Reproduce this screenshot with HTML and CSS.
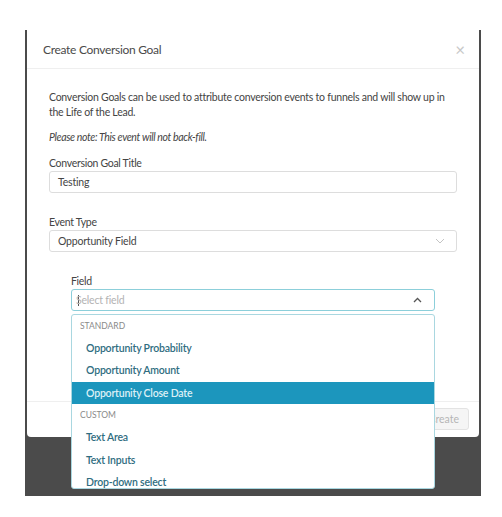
FILE: index.html
```html
<!DOCTYPE html>
<html lang="en">
<head>
    <meta charset="UTF-8">
    <meta name="viewport" content="width=device-width, initial-scale=1.0">
    <title>Create Conversion Goal</title>
    <link rel="stylesheet" href="styles.css">
</head>
<body>
    <div class="overlay">
        <div class="modal">
            <div class="modal-header">
                <h2>Create Conversion Goal</h2>
                <span class="close">&times;</span>
            </div>
            <div class="modal-body">
                <p class="intro">Conversion Goals can be used to attribute conversion events to funnels and will show up in the Life of the Lead.</p>
                <p class="note">Please note: This event will not back-fill.</p>

                <div class="form-group">
                    <label>Conversion Goal Title</label>
                    <div class="input">Testing</div>
                </div>

                <div class="form-group">
                    <label>Event Type</label>
                    <div class="input select">
                        <span>Opportunity Field</span>
                        <svg class="chevron" width="10" height="6" viewBox="0 0 10 6"><path d="M1 1l4 4 4-4" fill="none" stroke="#c4c4c4" stroke-width="1"/></svg>
                    </div>
                </div>

                <div class="form-group sub-field">
                    <label>Field</label>
                    <div class="input select focused">
                        <span class="placeholder"><i class="caret"></i>Select field</span>
                        <svg class="chevron" width="9" height="6" viewBox="0 0 9 6"><path d="M1 5l3.5-3.5L8 5" fill="none" stroke="#555" stroke-width="1.3"/></svg>
                    </div>
                    <div class="dropdown">
                        <div class="group-title">Standard</div>
                        <div class="option">Opportunity Probability</div>
                        <div class="option">Opportunity Amount</div>
                        <div class="option active">Opportunity Close Date</div>
                        <div class="group-title">Custom</div>
                        <div class="option">Text Area</div>
                        <div class="option">Text Inputs</div>
                        <div class="option">Drop-down select</div>
                    </div>
                </div>
            </div>
            <div class="modal-footer">
                <button type="button">Create</button>
            </div>
        </div>
    </div>
</body>
</html>
```

FILE: styles.css
```css
body {
    font-family: 'Lato', 'Liberation Sans', sans-serif;
    margin: 0;
    padding: 0;
    background-color: #ffffff;
    color: #444444;
}
.overlay {
    margin: 30px 0 0 25px;
    width: 456px;
    height: 466px;
    padding: 0 2px;
    box-sizing: border-box;
    background-color: #4b4b4b;
}
.modal {
    background-color: #ffffff;
    height: 407px;
    border-radius: 0 0 4px 4px;
    display: flex;
    flex-direction: column;
}
.modal-header {
    height: 38px;
    display: flex;
    align-items: center;
    justify-content: space-between;
    padding: 0 14px 0 16px;
    border-bottom: 1px solid #efefef;
}
.modal-header h2 {
    margin: 0;
    font-size: 12px;
    letter-spacing: -0.3px;
    font-weight: normal;
    color: #4a4a4a;
}
.close {
    font-size: 17px;
    color: #c8c8c8;
    line-height: 1;
}
.modal-body {
    flex: 1;
    padding: 21px 22px 0 22px;
    position: relative;
}
p {
    margin: 0;
    font-size: 10.5px;
    letter-spacing: -0.25px;
    line-height: 15px;
}
.note {
    margin-top: 10px;
    font-style: italic;
    letter-spacing: -0.35px;
}
.form-group {
    margin-top: 11px;
}
.form-group + .form-group {
    margin-top: 22px;
}
label {
    display: block;
    font-size: 10.5px;
    letter-spacing: -0.3px;
    line-height: 15px;
}
.input {
    height: 22px;
    border: 1px solid #dddddd;
    border-radius: 3px;
    box-sizing: border-box;
    padding: 0 8px;
    font-size: 10.5px;
    letter-spacing: -0.2px;
    line-height: 20px;
    display: flex;
    align-items: center;
    justify-content: space-between;
}
.sub-field {
    margin-left: 22px;
    margin-right: 22px;
    position: relative;
}
.focused {
    border: 1.5px solid #8ccfda;
    padding: 0 9px 0 6px;
}
.placeholder {
    color: #b3b3b3;
    display: flex;
    align-items: center;
}
.caret {
    display: inline-block;
    width: 1px;
    height: 11px;
    background-color: #555555;
    margin-right: -3px;
}
.chevron {
    margin-right: 3px;
}
.dropdown {
    position: absolute;
    top: 40px;
    left: 0;
    right: 0;
    height: 175px;
    overflow: hidden;
    background-color: #ffffff;
    border: 1px solid #a9d7e0;
    border-radius: 3px;
    box-sizing: border-box;
}
.group-title {
    height: 22px;
    line-height: 22px;
    padding-left: 8px;
    font-size: 8.5px;
    text-transform: uppercase;
    color: #8a8a8a;
}
.option {
    height: 22.4px;
    line-height: 22px;
    padding-left: 14px;
    font-size: 10.5px;
    letter-spacing: -0.2px;
    font-weight: 600;
    color: #2f6d80;
}
.option.active {
    background-color: #1c96bd;
    color: #dcf0f6;
}
.modal-footer {
    height: 36px;
    border-top: 1px solid #efefef;
    display: flex;
    justify-content: flex-end;
    align-items: flex-start;
    padding: 6px 10px 0 0;
    box-sizing: border-box;
}
button {
    height: 22px;
    padding: 0 9px;
    font-family: inherit;
    font-size: 10.5px;
    color: #b5b5b5;
    background-color: #f5f5f5;
    border: 1px solid #e3e3e3;
    border-radius: 3px;
}
```
